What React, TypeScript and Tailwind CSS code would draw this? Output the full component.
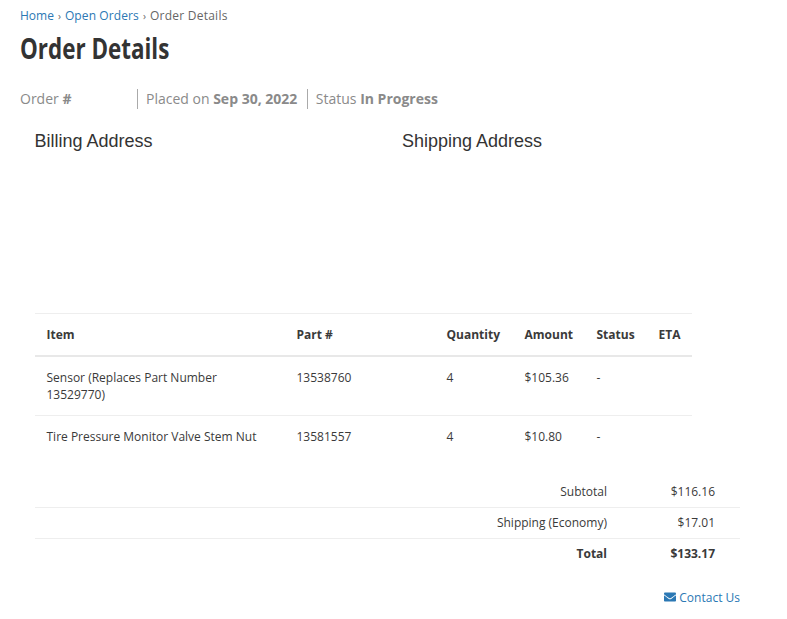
import { FaEnvelope } from 'react-icons/fa'

const items = [
  { name: 'Sensor (Replaces Part Number 13529770)', part: '13538760', qty: '4', amount: '$105.36', status: '-' },
  { name: 'Tire Pressure Monitor Valve Stem Nut', part: '13581557', qty: '4', amount: '$10.80', status: '-' },
]

const headers = ['Item', 'Part #', 'Quantity', 'Amount', 'Status', 'ETA']

export default function App() {
  return (
    <div className="h-[619px] w-[787px] overflow-hidden bg-white font-['Open_Sans',sans-serif] text-[#3a3a3a]">
      <div className="px-5 pt-[7px]">
        <nav className="flex h-[18px] items-center text-[12px] leading-[18px] text-[#666]">
          <a className="text-[#2b78b4]">Home</a>
          <span className="px-1 text-[10px]">›</span>
          <a className="text-[#2b78b4] tracking-[0.1px]">Open Orders</a>
          <span className="px-1 text-[10px]">›</span>
          <span className="tracking-[0.25px]">Order Details</span>
        </nav>
        <h1 className="mt-[3px] h-[40px] origin-left scale-x-[0.8] text-[28px] leading-[40px] font-bold whitespace-nowrap text-[#333]">
          Order Details
        </h1>
        <div className="mt-[21px] flex h-5 items-center text-[14px] leading-5 text-[#8a8a8a]">
          <div className="h-5 w-[117px]">
            Order <b>#</b>
          </div>
          <div className="h-5 border-l border-[#aaa] pr-[9.5px] pl-2">
            Placed on <b>Sep 30, 2022</b>
          </div>
          <div className="h-5 border-l border-[#aaa] pl-2">
            Status <b>In Progress</b>
          </div>
        </div>
      </div>

      <div className="mt-[22px] flex pl-[34.5px] font-['Liberation_Sans',sans-serif] text-[18px] leading-[20px] text-[#333]">
        <h2 className="w-[367.5px]">Billing Address</h2>
        <h2>Shipping Address</h2>
      </div>

      <table className="mt-[162px] ml-[35px] w-[657px] table-fixed border-collapse text-[12px] leading-[17px]">
        <colgroup>
          <col className="w-[250px]" />
          <col className="w-[150px]" />
          <col className="w-[78px]" />
          <col className="w-[72px]" />
          <col className="w-[62px]" />
          <col />
        </colgroup>
        <thead>
          <tr className="h-[42px] border-t border-b-2 border-t-[#eee] border-b-[#e8e8e8]">
            {headers.map((h) => (
              <th key={h} className="px-[11.5px] text-left font-bold">
                {h}
              </th>
            ))}
          </tr>
        </thead>
        <tbody>
          <tr className="border-b border-[#eee]">
            <td className="px-[11.5px] pt-[12px] pb-3 align-top">{items[0].name}</td>
            <td className="px-[11.5px] pt-[12px] pb-3 align-top">{items[0].part}</td>
            <td className="px-[11.5px] pt-[12px] pb-3 align-top">{items[0].qty}</td>
            <td className="px-[11.5px] pt-[12px] pb-3 align-top">{items[0].amount}</td>
            <td className="px-[11.5px] pt-[12px] pb-3 align-top">{items[0].status}</td>
            <td className="px-[11.5px] pt-[12px] pb-3 align-top"></td>
          </tr>
          <tr>
            <td className="px-[11.5px] pt-[12px] pb-3 align-top">{items[1].name}</td>
            <td className="px-[11.5px] pt-[12px] pb-3 align-top">{items[1].part}</td>
            <td className="px-[11.5px] pt-[12px] pb-3 align-top">{items[1].qty}</td>
            <td className="px-[11.5px] pt-[12px] pb-3 align-top">{items[1].amount}</td>
            <td className="px-[11.5px] pt-[12px] pb-3 align-top">{items[1].status}</td>
            <td className="px-[11.5px] pt-[12px] pb-3 align-top"></td>
          </tr>
        </tbody>
      </table>

      <div className="mt-[20px] ml-[35px] w-[705px] text-[12px] leading-[17px]">
        <div className="flex h-[31px] items-center justify-end border-b border-[#eee] pr-[25px]">
          <span className="w-[200px] text-right">Subtotal</span>
          <span className="w-[108px] text-right">$116.16</span>
        </div>
        <div className="flex h-[31px] items-center justify-end border-b border-[#eee] pr-[25px]">
          <span className="w-[200px] text-right">Shipping (Economy)</span>
          <span className="w-[108px] text-right">$17.01</span>
        </div>
        <div className="flex h-[30px] items-center justify-end pr-[25px] font-bold">
          <span className="w-[200px] text-right">Total</span>
          <span className="w-[108px] text-right">$133.17</span>
        </div>
        <div className="mt-[20px] flex items-center justify-end gap-[3px] text-[#2b78b4]">
          <FaEnvelope size={12} />
          <span>Contact Us</span>
        </div>
      </div>
    </div>
  )
}
